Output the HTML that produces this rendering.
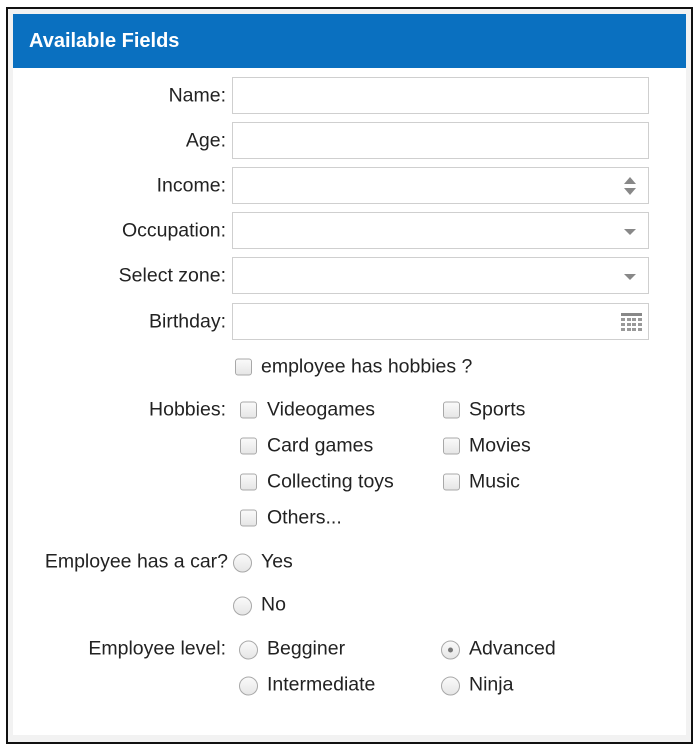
<!DOCTYPE html>
<html><head><meta charset="utf-8"><style>
*{box-sizing:border-box;margin:0;padding:0}
body{width:700px;height:749px;background:#fff;position:relative;font-family:"Liberation Sans",Arial,sans-serif;font-size:19.5px;color:#222;overflow:hidden}
.outer{position:absolute;left:6px;top:7px;width:687px;height:737px;border:2px solid #111;background:#f2f2f2}
.inner{position:absolute;left:13px;top:14px;width:673px;height:721px;background:#fff}
.hdr{position:absolute;left:13px;top:14px;width:673px;height:54px;background:#0a70c0;color:#fff;font-weight:bold;font-size:20px;padding:16px 0 0 16px}
.lbl{position:absolute;right:474px;text-align:right;white-space:nowrap;transform:translateY(-50%)}
.inp{position:absolute;left:232px;width:417px;height:37px;border:1px solid #cfcfcf;background:#fff}
.t{position:absolute;white-space:nowrap;transform:translateY(-50%)}
.cb{position:absolute;width:17px;height:17px;border:1px solid #a8a8a8;border-radius:3px;background:linear-gradient(#fafafa,#e6e6e6);transform:translateY(-50%)}
.rd{position:absolute;width:19px;height:19px;border:1px solid #a8a8a8;border-radius:50%;background:linear-gradient(#fafafa,#e6e6e6);transform:translateY(-50%)}
.dot::after{content:"";position:absolute;left:6px;top:6px;width:5px;height:5px;border-radius:50%;background:#777}
.arr{position:absolute;right:12px;width:0;height:0;border-left:6px solid transparent;border-right:6px solid transparent}
</style></head><body>
<div class="outer"></div><div class="inner"></div>
<div class="hdr">Available Fields</div>

<div class="lbl" style="top:96px">Name:</div><div class="inp" style="top:77px"></div>
<div class="lbl" style="top:141px">Age:</div><div class="inp" style="top:122px"></div>
<div class="lbl" style="top:186px">Income:</div><div class="inp" style="top:167px"><div class="arr" style="top:9px;border-bottom:7px solid #888"></div><div class="arr" style="top:20px;border-top:7px solid #888"></div></div>
<div class="lbl" style="top:231px">Occupation:</div><div class="inp" style="top:212px"><div class="arr" style="top:16px;border-top:6px solid #888"></div></div>
<div class="lbl" style="top:276px">Select zone:</div><div class="inp" style="top:257px"><div class="arr" style="top:16px;border-top:6px solid #888"></div></div>
<div class="lbl" style="top:322px">Birthday:</div><div class="inp" style="top:303px">
<svg style="position:absolute;right:6px;top:9px" width="21" height="18" viewBox="0 0 21 18"><rect x="0" y="0" width="21" height="3" fill="#888"/><g fill="#999"><rect x="0" y="5" width="4" height="3"/><rect x="6" y="5" width="4" height="3"/><rect x="11" y="5" width="4" height="3"/><rect x="17" y="5" width="4" height="3"/><rect x="0" y="10" width="4" height="3"/><rect x="6" y="10" width="4" height="3"/><rect x="11" y="10" width="4" height="3"/><rect x="17" y="10" width="4" height="3"/><rect x="0" y="15" width="4" height="3"/><rect x="6" y="15" width="4" height="3"/><rect x="11" y="15" width="4" height="3"/><rect x="17" y="15" width="4" height="3"/></g></svg></div>

<div class="cb" style="left:235px;top:367px"></div><div class="t" style="left:261px;top:367px">employee has hobbies ?</div>

<div class="lbl" style="top:410px">Hobbies:</div>
<div class="cb" style="left:240px;top:410px"></div><div class="t" style="left:267px;top:410px">Videogames</div>
<div class="cb" style="left:443px;top:410px"></div><div class="t" style="left:469px;top:410px">Sports</div>
<div class="cb" style="left:240px;top:446px"></div><div class="t" style="left:267px;top:446px">Card games</div>
<div class="cb" style="left:443px;top:446px"></div><div class="t" style="left:469px;top:446px">Movies</div>
<div class="cb" style="left:240px;top:482px"></div><div class="t" style="left:267px;top:482px">Collecting toys</div>
<div class="cb" style="left:443px;top:482px"></div><div class="t" style="left:469px;top:482px">Music</div>
<div class="cb" style="left:240px;top:518px"></div><div class="t" style="left:267px;top:518px">Others...</div>

<div class="lbl" style="top:562px;right:472px">Employee has a car?</div>
<div class="rd" style="left:233px;top:563px"></div><div class="t" style="left:261px;top:562px">Yes</div>
<div class="rd" style="left:233px;top:606px"></div><div class="t" style="left:261px;top:605px">No</div>

<div class="lbl" style="top:649px">Employee level:</div>
<div class="rd" style="left:239px;top:650px"></div><div class="t" style="left:267px;top:649px">Begginer</div>
<div class="rd dot" style="left:441px;top:650px"></div><div class="t" style="left:469px;top:649px">Advanced</div>
<div class="rd" style="left:239px;top:686px"></div><div class="t" style="left:267px;top:685px">Intermediate</div>
<div class="rd" style="left:441px;top:686px"></div><div class="t" style="left:469px;top:685px">Ninja</div>
</body></html>
